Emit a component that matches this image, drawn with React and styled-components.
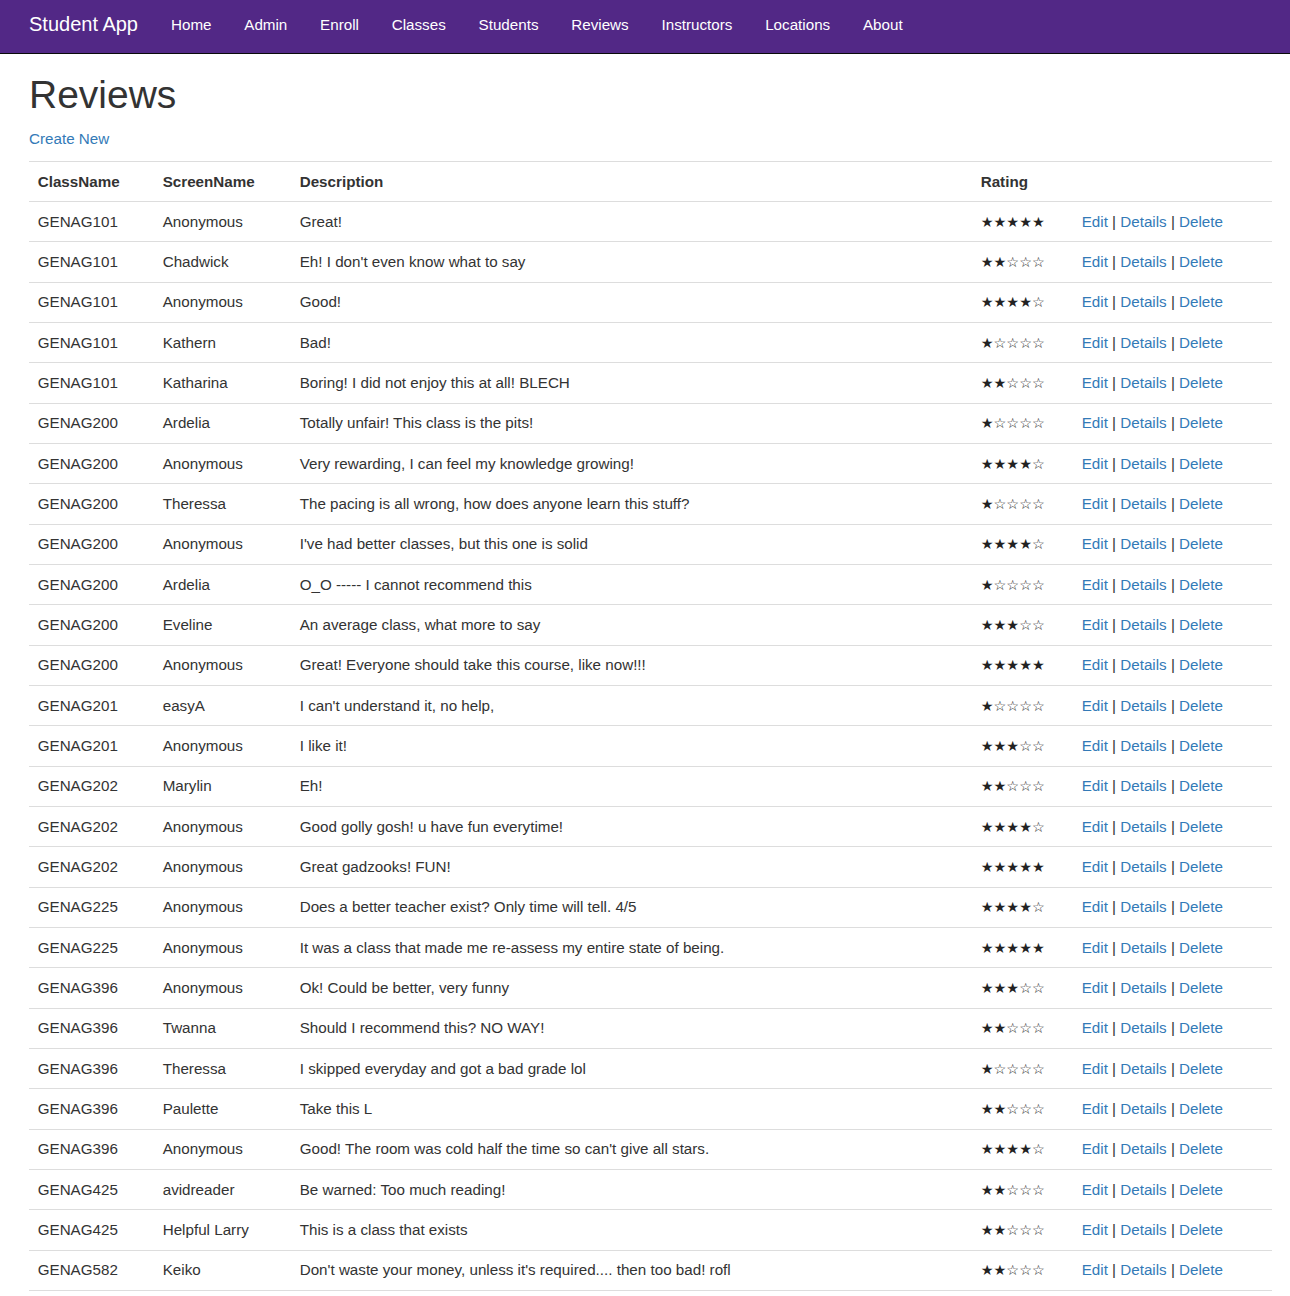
import React from 'react'
import styled, { createGlobalStyle } from 'styled-components'

const reviews = [
  ['GENAG101', 'Anonymous', 'Great!', 5],
  ['GENAG101', 'Chadwick', "Eh! I don't even know what to say", 2],
  ['GENAG101', 'Anonymous', 'Good!', 4],
  ['GENAG101', 'Kathern', 'Bad!', 1],
  ['GENAG101', 'Katharina', 'Boring! I did not enjoy this at all! BLECH', 2],
  ['GENAG200', 'Ardelia', 'Totally unfair! This class is the pits!', 1],
  ['GENAG200', 'Anonymous', 'Very rewarding, I can feel my knowledge growing!', 4],
  ['GENAG200', 'Theressa', 'The pacing is all wrong, how does anyone learn this stuff?', 1],
  ['GENAG200', 'Anonymous', "I've had better classes, but this one is solid", 4],
  ['GENAG200', 'Ardelia', 'O_O ----- I cannot recommend this', 1],
  ['GENAG200', 'Eveline', 'An average class, what more to say', 3],
  ['GENAG200', 'Anonymous', 'Great! Everyone should take this course, like now!!!', 5],
  ['GENAG201', 'easyA', "I can't understand it, no help,", 1],
  ['GENAG201', 'Anonymous', 'I like it!', 3],
  ['GENAG202', 'Marylin', 'Eh!', 2],
  ['GENAG202', 'Anonymous', 'Good golly gosh! u have fun everytime!', 4],
  ['GENAG202', 'Anonymous', 'Great gadzooks! FUN!', 5],
  ['GENAG225', 'Anonymous', 'Does a better teacher exist? Only time will tell. 4/5', 4],
  ['GENAG225', 'Anonymous', 'It was a class that made me re-assess my entire state of being.', 5],
  ['GENAG396', 'Anonymous', 'Ok! Could be better, very funny', 3],
  ['GENAG396', 'Twanna', 'Should I recommend this? NO WAY!', 2],
  ['GENAG396', 'Theressa', 'I skipped everyday and got a bad grade lol', 1],
  ['GENAG396', 'Paulette', 'Take this L', 2],
  ['GENAG396', 'Anonymous', "Good! The room was cold half the time so can't give all stars.", 4],
  ['GENAG425', 'avidreader', 'Be warned: Too much reading!', 2],
  ['GENAG425', 'Helpful Larry', 'This is a class that exists', 2],
  ['GENAG582', 'Keiko', "Don't waste your money, unless it's required.... then too bad! rofl", 2],
]

const navLinks = ['Home', 'Admin', 'Enroll', 'Classes', 'Students', 'Reviews', 'Instructors', 'Locations', 'About']

const App = () => {
  return (
    <>
      <GlobalStyle />
      <Navbar>
        <Brand href="#">Student App</Brand>
        {navLinks.map((l) => (
          <NavLink key={l} href="#">{l}</NavLink>
        ))}
      </Navbar>
      <Main>
        <Title>Reviews</Title>
        <CreateP><A href="#">Create New</A></CreateP>
        <Table>
          <colgroup>
            <col style={{ width: 125 }} />
            <col style={{ width: 137 }} />
            <col style={{ width: 681 }} />
            <col style={{ width: 101 }} />
            <col style={{ width: 199 }} />
          </colgroup>
          <thead>
            <Tr>
              <Th>ClassName</Th>
              <Th>ScreenName</Th>
              <Th>Description</Th>
              <Th>Rating</Th>
              <Th></Th>
            </Tr>
          </thead>
          <tbody>
            {reviews.map((r, i) => (
              <Tr key={i}>
                <Td>{r[0]}</Td>
                <Td>{r[1]}</Td>
                <Td>{r[2]}</Td>
                <Td><Stars>{'★'.repeat(r[3]) + '☆'.repeat(5 - r[3])}</Stars></Td>
                <Td>
                  <A href="#">Edit</A> | <A href="#">Details</A> | <A href="#">Delete</A>
                </Td>
              </Tr>
            ))}
          </tbody>
        </Table>
      </Main>
    </>
  )
}

const GlobalStyle = createGlobalStyle`
    body {
        margin: 0;
        font-family: "Liberation Sans", Arial, sans-serif;
        font-size: 15.2px;
        color: #333;
        background: #fff;
    }
`

const Navbar = styled.nav`
    height: 54px;
    box-sizing: border-box;
    background-color: #522886;
    border-bottom: 1px solid #0a0a0a;
    display: flex;
    align-items: center;
    padding: 0 0 4px 29px;
`

const Brand = styled.a`
    font-size: 20px;
    color: #fff;
    text-decoration: none;
    margin-right: 16.6px;
`

const NavLink = styled.a`
    font-size: 15.2px;
    color: #fff;
    text-decoration: none;
    padding: 0 16.4px;
`

const Main = styled.main`
    padding: 0 18px 0 29px;
`

const Title = styled.h2`
    font-size: 39px;
    font-weight: 500;
    line-height: 1.1;
    margin: 20px 0 10.9px;
    color: #333;
`

const CreateP = styled.p`
    margin: 0 0 11.3px;
    line-height: 21.7px;
`

const A = styled.a`
    color: #337ab7;
    text-decoration: none;
`

const Table = styled.table`
    width: 1243px;
    table-layout: fixed;
    border-collapse: collapse;
    border-spacing: 0;
    tbody tr:last-child td {
        border-bottom: 1px solid #ddd;
    }
`

const Tr = styled.tr``

const Th = styled.th`
    text-align: left;
    font-weight: bold;
    padding: 9px 8.7px 8.4px;
    line-height: 21.9px;
    border-top: 1px solid #ddd;
    vertical-align: middle;
`

const Td = styled.td`
    padding: 8.7px;
    line-height: 21.96px;
    border-top: 1px solid #ddd;
    vertical-align: middle;
    white-space: nowrap;
`

const Stars = styled.span`
    display: inline-block;
    vertical-align: top;
    height: 21.96px;
    line-height: 23px;
    font-family: "DejaVu Sans", sans-serif;
    font-weight: bold;
    font-size: 14.3px;
    color: #222;
`

export default App
